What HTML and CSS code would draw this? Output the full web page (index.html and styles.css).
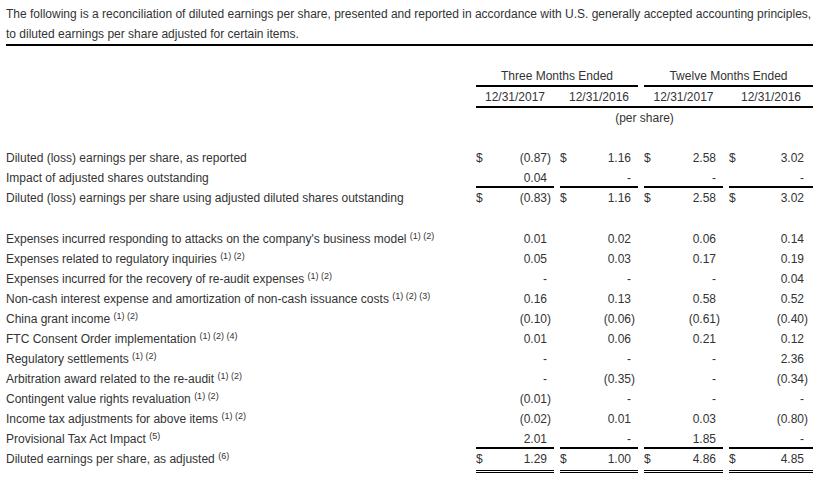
FILE: index.html
```html
<!DOCTYPE html>
<html>
<head>
<meta charset="utf-8">
<link rel="stylesheet" href="styles.css">
</head>
<body>
<div class="page">
  <p class="intro">The following is a reconciliation of diluted earnings per share, presented and reported in accordance with U.S. generally accepted accounting principles, to diluted earnings per share adjusted for certain items.</p>

  <div class="table">
    <div class="row head-groups">
      <div></div>
      <div class="grp">Three Months Ended</div>
      <div class="grp grp-12">Twelve Months Ended</div>
    </div>
    <div class="row head-dates">
      <div></div>
      <div class="dates">
        <div>12/31/2017</div>
        <div>12/31/2016</div>
        <div>12/31/2017</div>
        <div>12/31/2016</div>
      </div>
    </div>
    <div class="row head-unit">
      <div></div>
      <div class="unit">(per share)</div>
    </div>

    <div class="spacer"></div>

    <div class="row">
      <div class="label">Diluted (loss) earnings per share, as reported</div>
      <div class="v"><span class="cur">$</span><span class="n">(0.87<span class="cp">)</span></span></div>
      <div class="v"><span class="cur">$</span><span class="n">1.16</span></div>
      <div class="v"><span class="cur">$</span><span class="n">2.58</span></div>
      <div class="v last"><span class="cur">$</span><span class="n">3.02</span></div>
    </div>
    <div class="row">
      <div class="label">Impact of adjusted shares outstanding</div>
      <div class="v ul"><span class="n">0.04</span></div>
      <div class="v ul"><span class="n">-</span></div>
      <div class="v ul"><span class="n">-</span></div>
      <div class="v ul last"><span class="n">-</span></div>
    </div>
    <div class="row">
      <div class="label">Diluted (loss) earnings per share using adjusted diluted shares outstanding</div>
      <div class="v"><span class="cur">$</span><span class="n">(0.83<span class="cp">)</span></span></div>
      <div class="v"><span class="cur">$</span><span class="n">1.16</span></div>
      <div class="v"><span class="cur">$</span><span class="n">2.58</span></div>
      <div class="v last"><span class="cur">$</span><span class="n">3.02</span></div>
    </div>

    <div class="spacer spacer-b"></div>

    <div class="row">
      <div class="label">Expenses incurred responding to attacks on the company's business model <sup>(1) (2)</sup></div>
      <div class="v"><span class="n">0.01</span></div>
      <div class="v"><span class="n">0.02</span></div>
      <div class="v"><span class="n">0.06</span></div>
      <div class="v last"><span class="n">0.14</span></div>
    </div>
    <div class="row">
      <div class="label">Expenses related to regulatory inquiries <sup>(1) (2)</sup></div>
      <div class="v"><span class="n">0.05</span></div>
      <div class="v"><span class="n">0.03</span></div>
      <div class="v"><span class="n">0.17</span></div>
      <div class="v last"><span class="n">0.19</span></div>
    </div>
    <div class="row">
      <div class="label">Expenses incurred for the recovery of re-audit expenses <sup>(1) (2)</sup></div>
      <div class="v"><span class="n">-</span></div>
      <div class="v"><span class="n">-</span></div>
      <div class="v"><span class="n">-</span></div>
      <div class="v last"><span class="n">0.04</span></div>
    </div>
    <div class="row">
      <div class="label">Non-cash interest expense and amortization of non-cash issuance costs <sup>(1) (2) (3)</sup></div>
      <div class="v"><span class="n">0.16</span></div>
      <div class="v"><span class="n">0.13</span></div>
      <div class="v"><span class="n">0.58</span></div>
      <div class="v last"><span class="n">0.52</span></div>
    </div>
    <div class="row">
      <div class="label">China grant income <sup>(1) (2)</sup></div>
      <div class="v"><span class="n">(0.10<span class="cp">)</span></span></div>
      <div class="v"><span class="n">(0.06<span class="cp">)</span></span></div>
      <div class="v"><span class="n">(0.61<span class="cp">)</span></span></div>
      <div class="v last"><span class="n">(0.40<span class="cp">)</span></span></div>
    </div>
    <div class="row">
      <div class="label">FTC Consent Order implementation <sup>(1) (2) (4)</sup></div>
      <div class="v"><span class="n">0.01</span></div>
      <div class="v"><span class="n">0.06</span></div>
      <div class="v"><span class="n">0.21</span></div>
      <div class="v last"><span class="n">0.12</span></div>
    </div>
    <div class="row">
      <div class="label">Regulatory settlements <sup>(1) (2)</sup></div>
      <div class="v"><span class="n">-</span></div>
      <div class="v"><span class="n">-</span></div>
      <div class="v"><span class="n">-</span></div>
      <div class="v last"><span class="n">2.36</span></div>
    </div>
    <div class="row">
      <div class="label">Arbitration award related to the re-audit <sup>(1) (2)</sup></div>
      <div class="v"><span class="n">-</span></div>
      <div class="v"><span class="n">(0.35<span class="cp">)</span></span></div>
      <div class="v"><span class="n">-</span></div>
      <div class="v last"><span class="n">(0.34<span class="cp">)</span></span></div>
    </div>
    <div class="row">
      <div class="label">Contingent value rights revaluation <sup>(1) (2)</sup></div>
      <div class="v"><span class="n">(0.01<span class="cp">)</span></span></div>
      <div class="v"><span class="n">-</span></div>
      <div class="v"><span class="n">-</span></div>
      <div class="v last"><span class="n">-</span></div>
    </div>
    <div class="row">
      <div class="label">Income tax adjustments for above items <sup>(1) (2)</sup></div>
      <div class="v"><span class="n">(0.02<span class="cp">)</span></span></div>
      <div class="v"><span class="n">0.01</span></div>
      <div class="v"><span class="n">0.03</span></div>
      <div class="v last"><span class="n">(0.80<span class="cp">)</span></span></div>
    </div>
    <div class="row">
      <div class="label">Provisional Tax Act Impact <sup>(5)</sup></div>
      <div class="v ul"><span class="n">2.01</span></div>
      <div class="v ul"><span class="n">-</span></div>
      <div class="v ul"><span class="n">1.85</span></div>
      <div class="v ul last"><span class="n">-</span></div>
    </div>
    <div class="row row-total">
      <div class="label">Diluted earnings per share, as adjusted <sup>(6)</sup></div>
      <div class="v dbl"><span class="cur">$</span><span class="n">1.29</span></div>
      <div class="v dbl"><span class="cur">$</span><span class="n">1.00</span></div>
      <div class="v dbl"><span class="cur">$</span><span class="n">4.86</span></div>
      <div class="v dbl last"><span class="cur">$</span><span class="n">4.85</span></div>
    </div>
  </div>
</div>
</body>
</html>
```

FILE: styles.css
```css
* {
  box-sizing: border-box;
}

html, body {
  margin: 0;
  padding: 0;
  background: #fff;
}

body {
  font-family: "Liberation Sans", Arial, sans-serif;
  font-size: 12px;
  color: #333;
}

.page {
  padding: 4px 5px 0 6px;
  width: 818px;
}

.intro {
  margin: 0;
  line-height: 20px;
  border-bottom: 2px solid #000;
}

.table {
  padding-top: 20px;
}

.row {
  display: grid;
  grid-template-columns: 464px 78px 78px 79px 84px;
  column-gap: 6px;
  height: 20px;
  line-height: 20px;
}

.head-groups,
.head-dates {
  height: 21px;
}

.grp {
  grid-column: 2 / span 2;
  text-align: center;
  border-bottom: 2px solid #000;
  height: 21px;
}

.grp-12 {
  grid-column: 4 / span 2;
}

.dates {
  grid-column: 2 / span 4;
  display: grid;
  grid-template-columns: 78px 78px 79px 84px;
  column-gap: 6px;
  text-align: center;
  border-bottom: 2px solid #000;
  height: 21px;
}

.unit {
  grid-column: 2 / span 4;
  text-align: center;
}

.spacer {
  height: 20px;
}

.spacer-b {
  height: 21px;
}

.label {
  white-space: nowrap;
}

sup {
  font-size: 9px;
  line-height: 0;
  vertical-align: 4px;
}

.v {
  display: flex;
  justify-content: space-between;
  padding-right: 7px;
  height: 20px;
}

.v.last {
  padding-right: 9px;
}

.n {
  margin-left: auto;
}

.cp {
  margin-right: -4px;
}

.ul {
  border-bottom: 2px solid #000;
}

.row-total {
  height: 24px;
}

.dbl {
  height: 24px;
  padding-bottom: 1px;
  line-height: 20px;
  border-bottom: 3px double #000;
}
```
